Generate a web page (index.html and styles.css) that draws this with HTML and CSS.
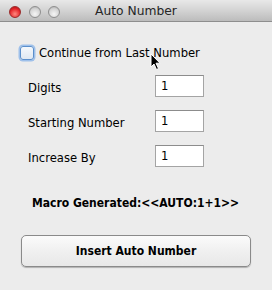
FILE: index.html
```html
<!DOCTYPE html>
<html>
<head>
<meta charset="utf-8">
<link rel="stylesheet" href="styles.css">
</head>
<body>
<div class="window">
  <div class="titlebar">
    <div class="lights">
      <span class="light red"></span>
      <span class="light gray"></span>
      <span class="light gray"></span>
    </div>
    <div class="title">Auto Number</div>
  </div>
  <div class="content">
    <label class="check">
      <span class="box"></span>
      <span class="check-label">Continue from Last Number</span>
      <svg class="cursor" width="12" height="18" viewBox="0 0 12 18"><path d="M1 1 L1 14 L4 11 L6.5 16.5 L8.5 15.5 L6 10.2 L10 10.2 Z" fill="#000" stroke="#fff" stroke-width="1"/></svg>
    </label>
    <div class="fields">
      <div class="row"><span class="lbl">Digits</span><span class="input">1</span></div>
      <div class="row"><span class="lbl">Starting Number</span><span class="input">1</span></div>
      <div class="row"><span class="lbl">Increase By</span><span class="input">1</span></div>
    </div>
    <div class="macro">Macro Generated:&lt;&lt;AUTO:1+1&gt;&gt;</div>
    <div class="button">Insert Auto Number</div>
  </div>
</div>
</body>
</html>
```
FILE: styles.css
```css
html, body {
  margin: 0;
  padding: 0;
  background: #ececec;
}
body {
  font-family: "DejaVu Sans", sans-serif;
  font-size: 11.6px;
  color: #000;
}
.window {
  width: 272px;
  height: 290px;
  background: #ececec;
  display: flex;
  flex-direction: column;
}
.titlebar {
  height: 21px;
  border-bottom: 1px solid #8e8e8e;
  background: linear-gradient(#e8e8e8, #d3d3d3 50%, #bcbcbc);
  position: relative;
  display: flex;
  align-items: center;
  justify-content: center;
}
.lights {
  position: absolute;
  left: 9px;
  top: 6px;
  display: flex;
  gap: 7.5px;
}
.light {
  width: 12px;
  height: 12px;
  border-radius: 50%;
  box-sizing: border-box;
}
.light.red {
  background: radial-gradient(circle at 50% 70%, #ff8a80, #e4262a 60%, #a50f10);
  border: 1px solid #9b2a2a;
}
.light.gray {
  background: radial-gradient(circle at 50% 70%, #f6f6f6, #d4d4d4 60%, #a5a5a5);
  border: 1px solid #8f8f8f;
}
.title {
  font-size: 12.3px;
  color: #262626;
  margin-top: 1px;
}
.content {
  display: flex;
  flex-direction: column;
  padding: 24px 0 0 20px;
}
.check {
  display: flex;
  align-items: center;
  gap: 5px;
  height: 14px;
  position: relative;
}
.box {
  width: 12px;
  height: 12px;
  border: 1px solid #5a8fcc;
  border-radius: 3px;
  background: linear-gradient(#f4f8fc, #dfe8f2);
  box-shadow: 0 0 0 1.5px #9ec0ea;
}
.cursor {
  position: absolute;
  left: 130px;
  top: 7px;
}
.fields {
  display: flex;
  flex-direction: column;
  gap: 13px;
  margin-top: 15px;
  padding-left: 8px;
}
.row {
  display: flex;
  align-items: center;
  height: 22px;
}
.lbl {
  width: 127px;
  padding-top: 3px;
}
.input {
  width: 49px;
  height: 22px;
  box-sizing: border-box;
  border: 1px solid #a4a4a4;
  border-top-color: #8c8c8c;
  background: #fff;
  padding: 3px 0 0 5px;
}
.macro {
  font-family: "DejaVu Sans Condensed", "DejaVu Sans", sans-serif;
  font-size: 12px;
  font-weight: bold;
  margin-top: 29px;
  padding-left: 12px;
}
.button {
  margin-top: 25px;
  width: 230px;
  height: 32px;
  box-sizing: border-box;
  border: 1px solid #8a8a8a;
  border-radius: 5px;
  background: linear-gradient(#fbfbfb, #f0f0f0 50%, #e8e8e8);
  box-shadow: 0 1px 1px rgba(0,0,0,0.25);
  display: flex;
  align-items: center;
  justify-content: center;
  font-family: "DejaVu Sans Condensed", "DejaVu Sans", sans-serif;
  font-size: 12px;
  font-weight: bold;
  margin-left: 1px;
}
```
